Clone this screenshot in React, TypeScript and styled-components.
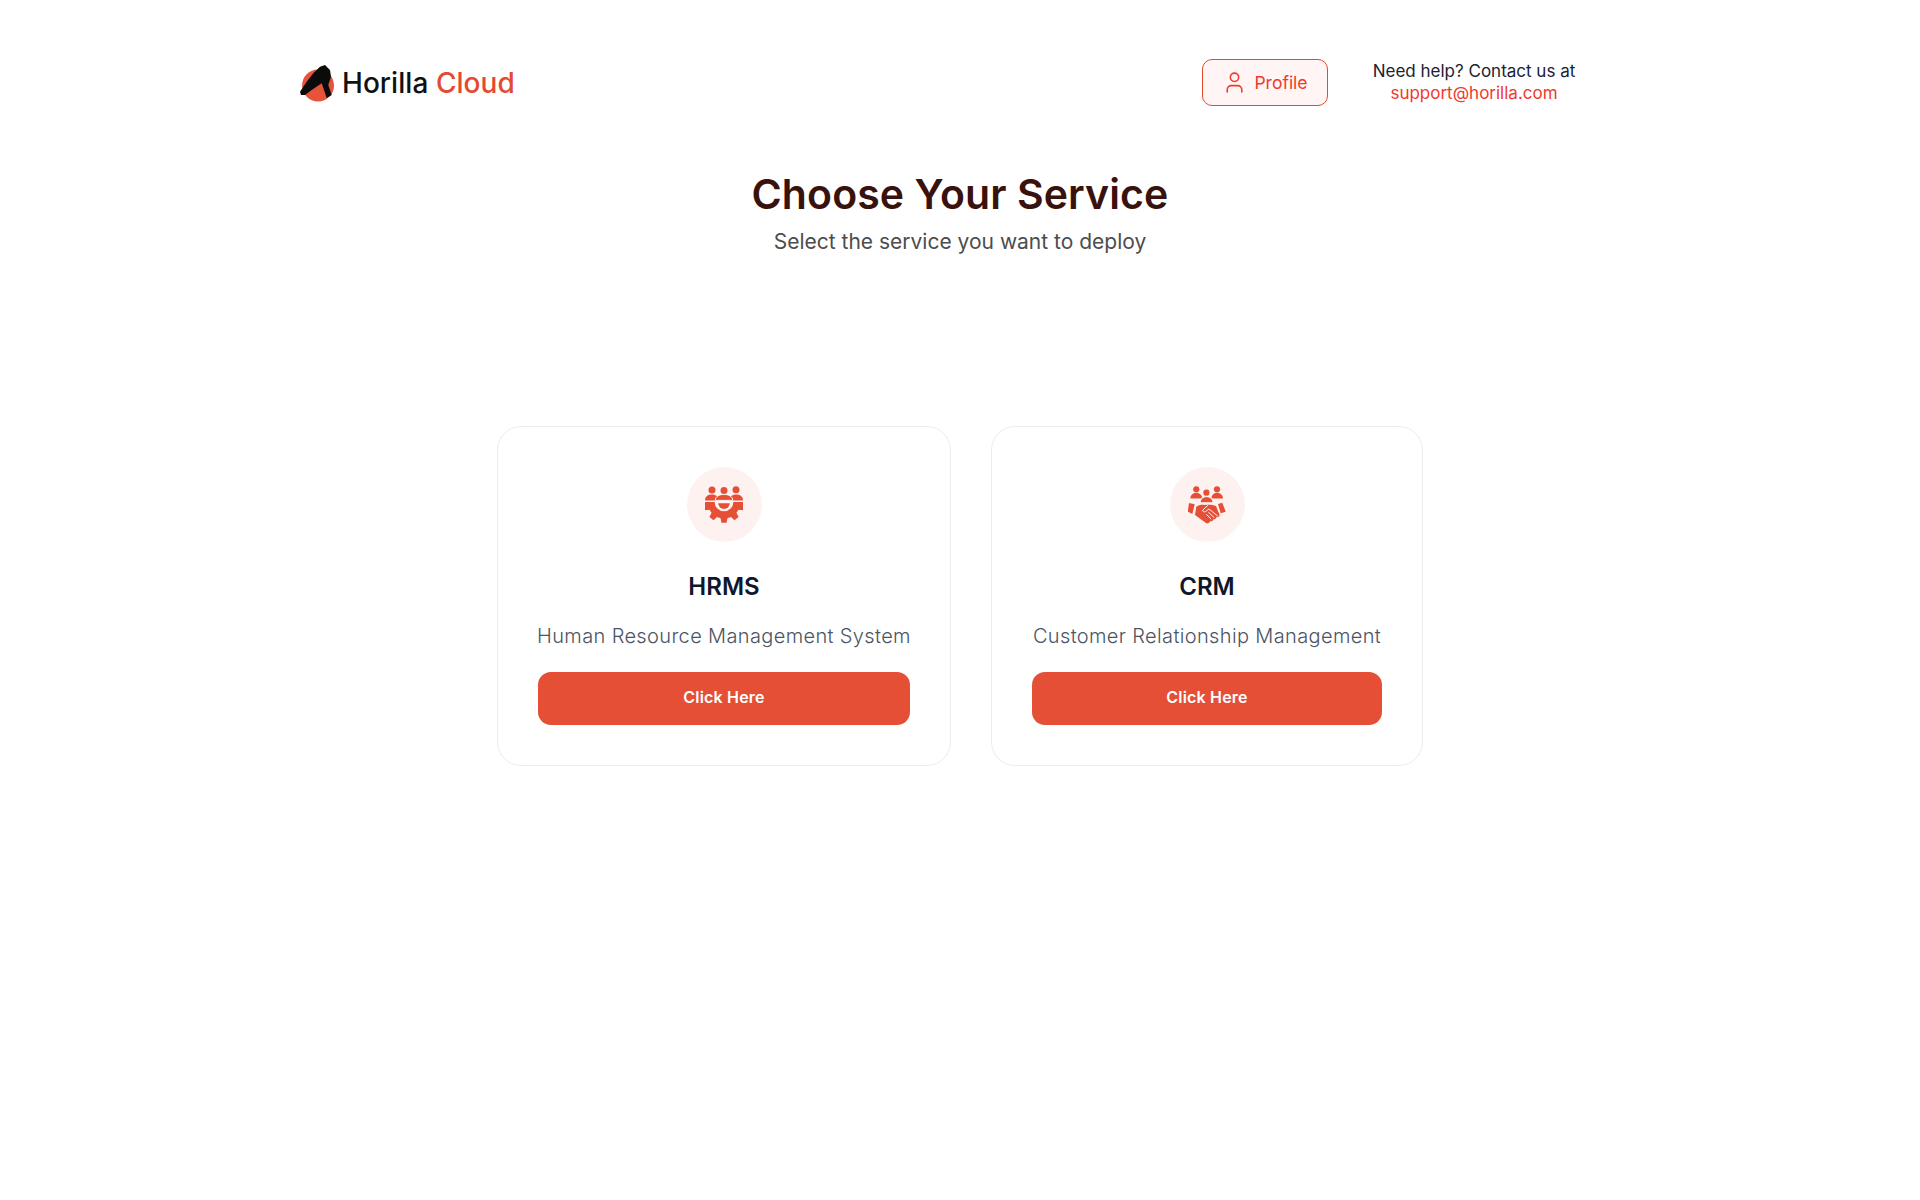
import React from "react";
import styled, { createGlobalStyle } from "styled-components";
import { User } from "lucide-react";

const Global = createGlobalStyle`
  html, body { margin: 0; padding: 0; background: #fff; }
  body { font-family: Inter, "Open Sans", sans-serif; }
`;

const Page = styled.div`
  min-height: 1200px;
  display: flex;
  flex-direction: column;
  align-items: center;
  background: #fff;
`;

const Header = styled.header`
  width: 1320px;
  height: 166px;
  padding: 0 44px 0 0;
  box-sizing: border-box;
  display: flex;
  align-items: center;
  justify-content: space-between;
`;

const Brand = styled.div`
  display: flex;
  align-items: center;
  gap: 8px;
`;

const Wordmark = styled.div`
  font-size: 28px;
  font-weight: 500;
  letter-spacing: 0.05px;
  color: #111;
  line-height: 1;
`;

const Accent = styled.span`
  color: #e5492f;
`;

const HeaderRight = styled.div`
  display: flex;
  align-items: center;
  gap: 44px;
`;

const ProfileButton = styled.button`
  width: 126px;
  height: 47px;
  margin-bottom: 2px;
  display: flex;
  align-items: center;
  justify-content: center;
  gap: 7px;
  background: #fff5f4;
  border: 1px solid #e5492f;
  border-radius: 10px;
  color: #ef3a2d;
  font: 400 17.5px Inter, sans-serif;
  padding: 0;
`;

const Help = styled.div`
  text-align: center;
  font-size: 17px;
  line-height: 22px;
  color: #1a2233;
  width: 204px;
  margin-top: -3px;
  white-space: nowrap;
`;

const HelpLink = styled.div`
  color: #ef3a2d;
`;

const Intro = styled.div`
  text-align: center;
  margin-top: 4px;
`;

const Title = styled.h1`
  margin: 0;
  font-size: 41px;
  line-height: 48px;
  font-weight: 600;
  letter-spacing: 0.1px;
  color: #3a120d;
`;

const Subtitle = styled.p`
  margin: 10px 0 0;
  font-size: 21px;
  line-height: 28px;
  font-weight: 400;
  color: #4d4d4d;
`;

const Cards = styled.div`
  display: flex;
  gap: 40px;
  margin-top: 170px;
`;

const Card = styled.section<{ $w: number }>`
  width: ${(p) => p.$w}px;
  height: 340px;
  box-sizing: border-box;
  padding: 40px;
  border: 1px solid #ececee;
  border-radius: 24px;
  display: flex;
  flex-direction: column;
  align-items: center;
  background: #fff;
`;

const IconCircle = styled.div`
  width: 75px;
  height: 75px;
  border-radius: 50%;
  background: #fef2f1;
  display: flex;
  align-items: center;
  justify-content: center;
  flex: none;
`;

const CardTitle = styled.h2`
  margin: 29px 0 0;
  font-size: 24px;
  line-height: 32px;
  font-weight: 600;
  color: #0f172a;
`;

const CardText = styled.p`
  margin: 19px 0 0;
  font-size: 20px;
  line-height: 28px;
  font-weight: 300;
  letter-spacing: 0.36px;
  color: #4b5563;
  white-space: nowrap;
`;

const CardButton = styled.button`
  margin-top: 22px;
  width: 100%;
  height: 53px;
  flex: none;
  border: none;
  padding: 0 0 4px;
  border-radius: 13px;
  background: #e54f36;
  color: #fff;
  font: 600 16px Inter, sans-serif;
  letter-spacing: 0.2px;
`;

const Logo = () => (
  <svg width="34" height="38" viewBox="0 -1 34 38" aria-hidden="true">
    <circle cx="18" cy="20.5" r="16" fill="#e5533a" />
    <path
      d="M0 26.7 L6.7 16.7 L13.3 8.3 L20 1.7 L25 0 L30 5 L31 11.7 L28.3 20 L31.7 30 L26.7 33 L21.7 18.3 L11.7 25 L5 30 L1 30 Z"
      fill="#0b0b0b"
    />
  </svg>
);

const gearPath = () => {
  const cx = 19;
  const cy = 16;
  const pts: string[] = [];
  const teeth = [16, 53, 90, 127, 164];
  const pol = (a: number, r: number) => {
    const t = (a * Math.PI) / 180;
    return `${(cx + r * Math.cos(t)).toFixed(2)} ${(cy + r * Math.sin(t)).toFixed(2)}`;
  };
  pts.push("M0 16 H38 V19");
  teeth.forEach((a) => {
    pts.push(`L${pol(a - 12, 16.5)} L${pol(a - 7, 21)} L${pol(a + 7, 21)} L${pol(a + 12, 16.5)}`);
  });
  pts.push("L0 19 Z");
  return pts.join(" ");
};

const HrmsIcon = () => (
  <svg width="38" height="38" viewBox="0 0 38 38" aria-hidden="true">
    <g fill="#e54f36">
      <circle cx="7" cy="4" r="3.5" />
      <circle cx="19" cy="4.4" r="3.5" />
      <circle cx="31" cy="3.8" r="3.5" />
      <path d="M0 14.4 C0 10.4 3 8.6 7 8.6 C10 8.6 13 10 14 14.4 Z" />
      <path d="M38 14.4 C38 10.4 35 8.6 31 8.6 C28 8.6 25 10 24 14.4 Z" />
      <path
        d="M10.2 14.4 C10.2 10.4 14.5 8.4 19 8.4 C23.5 8.4 27.8 10.4 27.8 14.4 Z"
        stroke="#fef2f1"
        strokeWidth="1"
      />
      <path d={gearPath()} />
    </g>
    <path d="M9.6 15.9 H28.4 A9.4 9.4 0 0 1 9.6 15.9 Z" fill="#fef2f1" />
    <path d="M13.2 17.2 H24.8 A5.8 5.8 0 0 1 13.2 17.2 Z" fill="#e54f36" />
  </svg>
);

const CrmIcon = () => (
  <svg width="38" height="38" viewBox="0 0 38 38" aria-hidden="true">
    <g fill="#e54f36">
      <circle cx="8.3" cy="3.3" r="3.1" />
      <circle cx="29" cy="3.3" r="3.1" />
      <circle cx="18.4" cy="6.7" r="3.1" />
      <path d="M2.3 12.6 C2.3 9 5 7 8.3 7 C11.6 7 14.3 9 14.3 12.6 Z" />
      <path d="M23.3 12.6 C23.3 9 26 7 29 7 C32.3 7 35 9 35 12.6 Z" />
      <path
        d="M12 16.8 C12 13 15 10.4 18.6 10.4 C22.2 10.4 25.2 13 25.2 16.8 Z"
        stroke="#fef2f1"
        strokeWidth="1.2"
      />
      <path d="M1 17 L6.7 18.3 L4.3 28 L-0.3 25.7 Z" />
      <path d="M30 18 L34.3 16.7 L37.7 25.7 L32.7 27.3 Z" />
      <path d="M8.3 20.7 C11 19 14 18.6 16.7 19 C20 18.4 25 18.6 28 20 L31.7 29 C31 31 29.5 31.6 28.5 31 C28 33 26.5 33.6 25.5 33.2 C25 35 23.5 35.6 22.4 35 C21.5 37 19.8 37.8 18.3 37.3 L7 29 Z" />
    </g>
    <g fill="none" stroke="#fef2f1" strokeWidth="1" strokeLinecap="round" strokeLinejoin="round">
      <path d="M19.6 19.6 L14.8 24 C14.4 25.6 16 26.4 17.4 25.6 L21 23 L29.4 29.8" />
      <path d="M20.6 26.4 L26 31.4" />
      <path d="M18.6 28.6 L23 32.8" />
    </g>
  </svg>
);

const services = [
  { key: "hrms", name: "HRMS", text: "Human Resource Management System", width: 454, Icon: HrmsIcon },
  { key: "crm", name: "CRM", text: "Customer Relationship Management", width: 432, Icon: CrmIcon },
];

export default function App() {
  return (
    <Page>
      <Global />
      <Header>
        <Brand>
          <Logo />
          <Wordmark>
            Horilla <Accent>Cloud</Accent>
          </Wordmark>
        </Brand>
        <HeaderRight>
          <ProfileButton>
            <User size={25} strokeWidth={1.5} />
            Profile
          </ProfileButton>
          <Help>
            Need help? Contact us at
            <HelpLink>support@horilla.com</HelpLink>
          </Help>
        </HeaderRight>
      </Header>
      <Intro>
        <Title>Choose Your Service</Title>
        <Subtitle>Select the service you want to deploy</Subtitle>
      </Intro>
      <Cards>
        {services.map(({ key, name, text, width, Icon }) => (
          <Card key={key} $w={width}>
            <IconCircle>
              <Icon />
            </IconCircle>
            <CardTitle>{name}</CardTitle>
            <CardText>{text}</CardText>
            <CardButton>Click Here</CardButton>
          </Card>
        ))}
      </Cards>
    </Page>
  );
}
